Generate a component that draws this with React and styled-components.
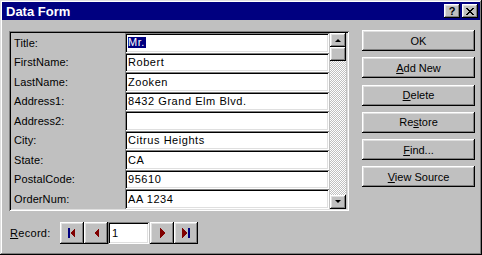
import React, { useState } from 'react'
import styled, { createGlobalStyle } from 'styled-components'

const GlobalStyle = createGlobalStyle`
  html, body {
    margin: 0;
    padding: 0;
    background: #c0c0c0;
  }
  body {
    font-family: "Liberation Sans", Arial, sans-serif;
    font-size: 11px;
  }
`

const fields = [
  { label: 'Title:', value: 'Mr.' },
  { label: 'FirstName:', value: 'Robert' },
  { label: 'LastName:', value: 'Zooken' },
  { label: 'Address1:', value: '8432 Grand Elm Blvd.' },
  { label: 'Address2:', value: '' },
  { label: 'City:', value: 'Citrus Heights' },
  { label: 'State:', value: 'CA' },
  { label: 'PostalCode:', value: '95610' },
  { label: 'OrderNum:', value: 'AA 1234' }
]

const actions = [
  { key: 'A', rest: 'dd New', pre: '' },
  { key: 'D', rest: 'elete', pre: '' },
  { key: 's', rest: 'tore', pre: 'Re' },
  { key: 'F', rest: 'ind...', pre: '' },
  { key: 'V', rest: 'iew Source', pre: '' }
]

const raised = `
  background: #c0c0c0;
  box-shadow: inset -1px -1px #000, inset 1px 1px #fff,
    inset -2px -2px #808080, inset 2px 2px #dfdfdf;
`

const sunken = `
  box-shadow: inset 1px 1px #808080, inset -1px -1px #fff,
    inset 2px 2px #000, inset -2px -2px #dfdfdf;
`

const Window = styled.div`
  width: 482px;
  height: 255px;
  box-sizing: border-box;
  padding: 2px;
  background: #c0c0c0;
  box-shadow: inset -1px -1px #000, inset 1px 1px #dfdfdf,
    inset -2px -2px #808080, inset 2px 2px #fff;
  color: #000;
  display: flex;
  flex-direction: column;
`

const TitleBar = styled.div`
  height: 18px;
  background: #000080;
  display: flex;
  align-items: center;
  padding: 0 2px 0 4px;
  color: #fff;
  font-weight: bold;
  font-size: 13px;
`

const TitleText = styled.span`
  flex: 1;
`

const TitleButton = styled.div`
  width: 16px;
  height: 14px;
  margin-left: ${(p) => (p.$gap ? '2px' : '0')};
  ${raised}
  display: flex;
  align-items: center;
  justify-content: center;
  color: #000;
  font-size: 11px;
  font-weight: bold;
  line-height: 1;
`

const Body = styled.div`
  padding: 10px 0 0 7px;
  display: flex;
  flex-direction: column;
`

const TopRow = styled.div`
  display: flex;
  align-items: flex-start;
`

const Panel = styled.div`
  margin-top: 1px;
  width: 340px;
  box-sizing: border-box;
  padding: 2px 1px 2px 2px;
  ${sunken}
  display: flex;
`

const Fields = styled.div`
  display: grid;
  grid-template-columns: 114px 204px;
  grid-auto-rows: 19.5px;
`

const Label = styled.div`
  display: flex;
  align-items: center;
  padding-left: 3px;
  letter-spacing: 0.1px;
`

const Field = styled.div`
  box-sizing: border-box;
  background: #fff;
  ${sunken}
  display: flex;
  align-items: center;
  padding: 0 3px;
  white-space: nowrap;
  overflow: hidden;
  letter-spacing: 0.55px;
`

const Selected = styled.span`
  background: #000080;
  color: #fff;
  line-height: 11px;
  padding-right: 1px;
`

const ScrollBar = styled.div`
  width: 16px;
  margin-left: 1px;
  display: flex;
  flex-direction: column;
`

const ScrollButton = styled.div`
  height: 14px;
  ${raised}
  display: flex;
  align-items: center;
  justify-content: center;
`

const Track = styled.div`
  flex: 1;
  background: repeating-conic-gradient(#fff 0 25%, #c0c0c0 0 50%) 0 0 / 2px 2px;
`

const Arrow = styled.div`
  width: 0;
  height: 0;
  border-left: 3px solid transparent;
  border-right: 3px solid transparent;
  ${(p) => (p.$down ? 'border-top: 3px solid #000;' : 'border-bottom: 3px solid #000;')}
`

const Actions = styled.div`
  margin-left: 13px;
  display: flex;
  flex-direction: column;
  gap: 6.3px;
`

const ActionButton = styled.button`
  width: 113px;
  height: 21px;
  border: none;
  ${raised}
  font: inherit;
  color: #000;
  padding: 0;
  cursor: default;
`

const NavRow = styled.div`
  margin-top: 11px;
  display: flex;
  align-items: center;
  height: 22px;
`

const NavLabel = styled.div`
  width: 51px;
  padding-left: 1px;
  box-sizing: border-box;
  letter-spacing: 0.3px;
`

const NavButton = styled.div`
  width: 24px;
  height: 22px;
  ${raised}
  display: flex;
  align-items: center;
  justify-content: center;
`

const RecordBox = styled.div`
  width: 41px;
  height: 22px;
  box-sizing: border-box;
  background: #fff;
  ${sunken}
  display: flex;
  align-items: center;
  padding-left: 4px;
  margin: 0 1px 0 0;
`

const NavIcon = ({ kind }) => {
  const red = '#800000'
  const blue = '#000080'
  if (kind === 'first') {
    return (
      <svg width="8" height="10" viewBox="0 0 8 10" shapeRendering="crispEdges">
        <rect x="0" y="0" width="2" height="10" fill={blue} />
        <polygon points="7,0 2,5 7,10" fill={red} />
      </svg>
    )
  }
  if (kind === 'prev') {
    return (
      <svg width="5" height="10" viewBox="0 0 5 10" shapeRendering="crispEdges">
        <polygon points="5,0 0,5 5,10" fill={red} />
      </svg>
    )
  }
  if (kind === 'next') {
    return (
      <svg width="5" height="10" viewBox="0 0 5 10" shapeRendering="crispEdges">
        <polygon points="0,0 5,5 0,10" fill={red} />
      </svg>
    )
  }
  return (
    <svg width="8" height="10" viewBox="0 0 8 10" shapeRendering="crispEdges">
      <polygon points="0,0 5,5 0,10" fill={red} />
      <rect x="6" y="0" width="2" height="10" fill={blue} />
    </svg>
  )
}

const App = () => {
  const [record] = useState('1')

  return (
    <>
      <GlobalStyle />
      <Window>
        <TitleBar>
          <TitleText>Data Form</TitleText>
          <TitleButton>?</TitleButton>
          <TitleButton $gap>
            <svg width="8" height="7" viewBox="0 0 8 7" shapeRendering="crispEdges">
              <path d="M0 0h2v1h-2zM6 0h2v1h-2zM1 1h2v1h-2zM5 1h2v1h-2zM2 2h4v1h-4zM3 3h2v1h-2zM2 4h4v1h-4zM1 5h2v1h-2zM5 5h2v1h-2zM0 6h2v1h-2zM6 6h2v1h-2z" fill="#000" />
            </svg>
          </TitleButton>
        </TitleBar>
        <Body>
          <TopRow>
            <Panel>
              <Fields>
                {fields.map((f, i) => (
                  <React.Fragment key={f.label}>
                    <Label>{f.label}</Label>
                    <Field>{i === 0 ? <Selected>{f.value}</Selected> : f.value}</Field>
                  </React.Fragment>
                ))}
              </Fields>
              <ScrollBar>
                <ScrollButton><Arrow /></ScrollButton>
                <ScrollButton />
                <Track />
                <ScrollButton><Arrow $down /></ScrollButton>
              </ScrollBar>
            </Panel>
            <Actions>
              <ActionButton>OK</ActionButton>
              {actions.map((a) => (
                <ActionButton key={a.rest}>
                  {a.pre}<u>{a.key}</u>{a.rest}
                </ActionButton>
              ))}
            </Actions>
          </TopRow>
          <NavRow>
            <NavLabel><u>R</u>ecord:</NavLabel>
            <NavButton><NavIcon kind="first" /></NavButton>
            <NavButton><NavIcon kind="prev" /></NavButton>
            <RecordBox>{record}</RecordBox>
            <NavButton><NavIcon kind="next" /></NavButton>
            <NavButton><NavIcon kind="last" /></NavButton>
          </NavRow>
        </Body>
      </Window>
    </>
  )
}

export default App
